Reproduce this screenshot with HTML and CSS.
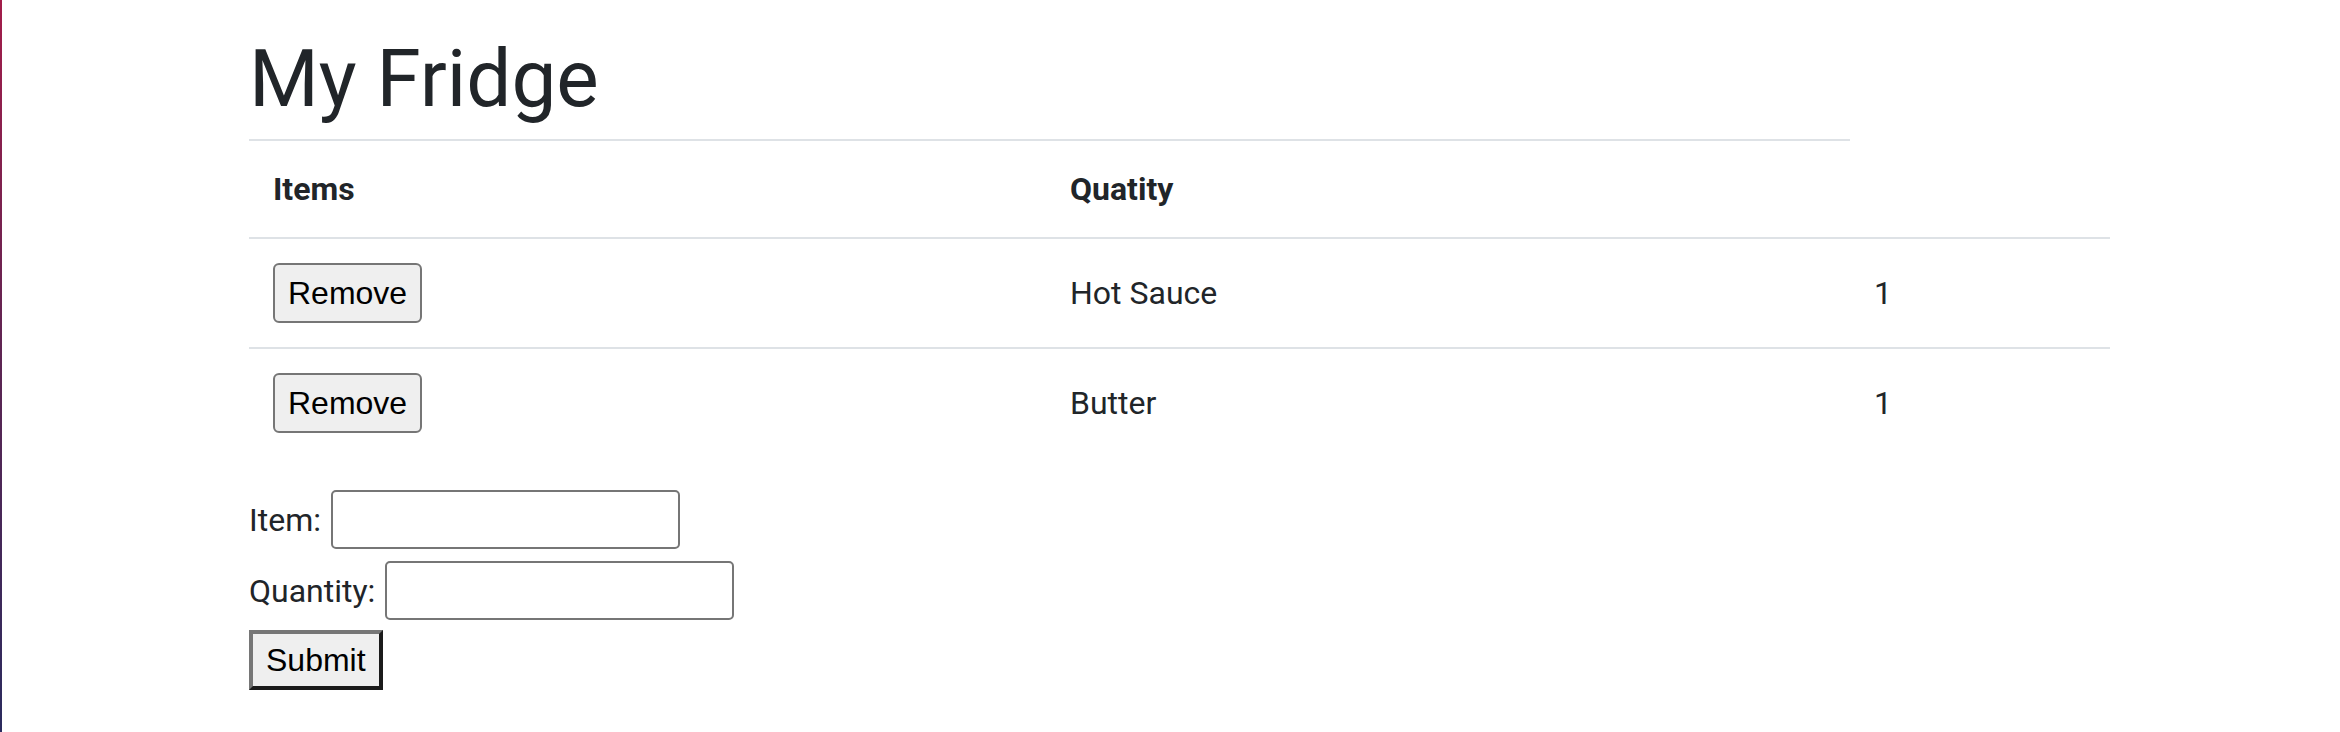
FILE: index.html
```html
<!DOCTYPE html>
<html lang="en">
<head>
<meta charset="utf-8">
<title>My Fridge</title>
<link rel="stylesheet" href="styles.css">
</head>
<body>
<div class="app">
  <div class="sidebar"></div>
  <main class="content">
    <h1 class="title">My Fridge</h1>
    <table class="fridge">
      <colgroup>
        <col class="col-a">
        <col class="col-b">
        <col class="col-c">
      </colgroup>
      <thead>
        <tr>
          <th>Items</th>
          <th>Quatity</th>
        </tr>
      </thead>
      <tbody>
        <tr>
          <td><button class="btn">Remove</button></td>
          <td>Hot Sauce</td>
          <td>1</td>
        </tr>
        <tr>
          <td><button class="btn">Remove</button></td>
          <td>Butter</td>
          <td>1</td>
        </tr>
      </tbody>
    </table>
    <form class="add-form">
      <div class="field">
        <label for="item">Item:</label>
        <input id="item" class="text-input" type="text">
      </div>
      <div class="field">
        <label for="qty">Quantity:</label>
        <input id="qty" class="text-input" type="text">
      </div>
      <button type="button" class="submit">Submit</button>
    </form>
  </main>
</div>
</body>
</html>
```

FILE: styles.css
```css
html, body {
  margin: 0;
  padding: 0;
  height: 100%;
  background: #ffffff;
}

body {
  font-family: Roboto, "Liberation Sans", Arial, sans-serif;
  font-size: 32px;
  line-height: 1.5;
  color: #212529;
}

.app {
  display: flex;
  min-height: 100%;
}

.sidebar {
  width: 2px;
  flex: 0 0 2px;
  background: linear-gradient(180deg, #a31d4a 0%, #5c2553 50%, #2b2b5e 100%);
}

.content {
  flex: 1;
  padding: 31px 230px 0 247px;
}

.title {
  margin: 0 0 12px;
  font-size: 80px;
  font-weight: 400;
  line-height: 1.2;
  color: #212529;
}

.fridge {
  width: 100%;
  table-layout: fixed;
  border-collapse: separate;
  border-spacing: 0;
  margin-bottom: 33px;
}

.col-a { width: 797px; }
.col-b { width: 804px; }
.col-c { width: 260px; }

.fridge th {
  text-align: left;
  font-weight: 700;
  padding: 24px;
  border-top: 2px solid #dee2e6;
}

.fridge td {
  padding: 24px;
  border-top: 2px solid #dee2e6;
  vertical-align: middle;
}

.btn {
  font-family: "Liberation Sans", Arial, sans-serif;
  font-size: 32px;
  line-height: 48px;
  color: #000000;
  background: #efefef;
  border: 2px solid #767676;
  border-radius: 6px;
  padding: 4px 13px;
  margin: 0;
}

.add-form {
  display: flex;
  flex-direction: column;
  align-items: flex-start;
}

.field {
  display: flex;
  align-items: center;
  gap: 10px;
  margin-bottom: 12px;
}

.field label {
  line-height: 48px;
}

.text-input {
  width: 349px;
  height: 59px;
  box-sizing: border-box;
  border: 2px solid #767676;
  border-radius: 5px;
  background: #ffffff;
  padding: 2px 4px;
  margin: 0;
  font-size: 32px;
}

.submit {
  margin-top: -2px;
  font-family: "Liberation Sans", Arial, sans-serif;
  font-size: 32px;
  line-height: 48px;
  color: #000000;
  background: #efefef;
  border-style: solid;
  border-width: 4px;
  border-color: #767676 #1b1b1b #1b1b1b #767676;
  border-radius: 0;
  padding: 2px 13px;
}
```
